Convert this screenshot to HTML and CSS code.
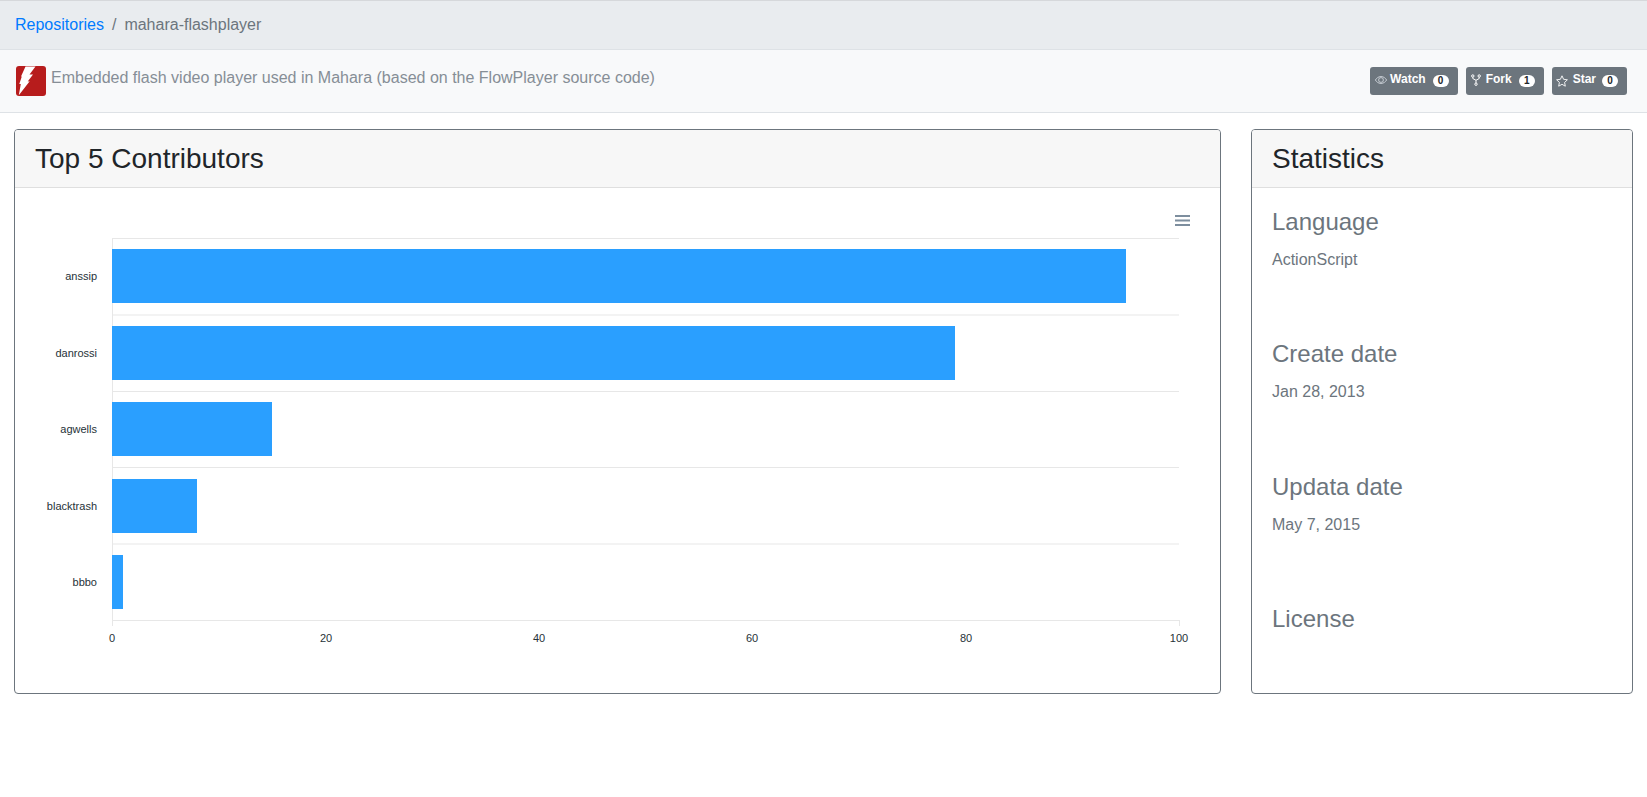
FILE: index.html
```html
<!DOCTYPE html>
<html lang="en">
<head>
<meta charset="utf-8">
<title>mahara-flashplayer</title>
<link rel="stylesheet" href="styles.css">
</head>
<body>
<nav class="crumbs"><a href="#">Repositories</a><span class="sep">/</span><span class="current">mahara-flashplayer</span></nav>
<header class="repo">
  <div class="desc">
    <svg class="logo" viewBox="0 0 30 30"><rect width="30" height="30" rx="3" fill="#b71c1c"/><path d="M9.500 .5 19.500 .5 13.500 8.500 17 8.500 11.700 15.500 13.700 15.200 2.800 29.300 4.800 18 3.300 18 5.800 10.500 5 10.500z" fill="#fff"/></svg>
    <span>Embedded flash video player used in Mahara (based on the FlowPlayer source code)</span>
  </div>
  <div class="actions">
    <a class="btn btn-watch" href="#"><svg class="ico" viewBox="0 0 12 12"><path d="M6 2.500C3.300 2.500 1.200 4.500.4 6 1.200 7.500 3.300 9.500 6 9.500S10.800 7.500 11.600 6C10.800 4.500 8.700 2.500 6 2.500z" fill="none" stroke="#ced4da" stroke-width=".9"/><circle cx="6" cy="6" r="2.400" fill="none" stroke="#ced4da" stroke-width=".9"/></svg><b>Watch</b><span class="badge">0</span></a>
    <a class="btn btn-fork" href="#"><svg class="ico" viewBox="0 0 12 12"><g fill="none" stroke="#fff" stroke-width="1"><circle cx="2.800" cy="2" r="1.200"/><circle cx="9.200" cy="2" r="1.200"/><circle cx="6" cy="10.200" r="1.200"/><path d="M2.800 3.200V4.500L6 6.300 9.200 4.500V3.200M6 6.300V9"/></g></svg><b>Fork</b><span class="badge">1</span></a>
    <a class="btn btn-star" href="#"><svg class="ico ico-star" viewBox="0 0 12 12"><path d="M6 .8l1.600 3.500 3.800.5-2.800 2.600.7 3.800L6 9.300l-3.300 1.900.7-3.800L.6 4.800l3.800-.5z" fill="none" stroke="#fff" stroke-width=".9"/></svg><b>Star</b><span class="badge">0</span></a>
  </div>
</header>
<main class="content">
  <section class="card card-chart">
    <h2 class="card-title">Top 5 Contributors</h2>
    <div class="chart">
      <svg class="chart-svg" viewBox="0 0 1205 506">
        <g class="grid">
          <path d="M97 50.500H1164M97 127H1164M97 203.500H1164M97 279.500H1164M97 356H1164M97 432.500H1164M97.500 50V438M1164.500 432V438"/>
        </g>
        <g class="bars">
          <rect x="97" y="61" width="1014" height="54"/>
          <rect x="97" y="138" width="843" height="54"/>
          <rect x="97" y="214" width="160" height="54"/>
          <rect x="97" y="291" width="85" height="54"/>
          <rect x="97" y="367" width="11" height="54"/>
        </g>
        <g class="ylabels">
          <text x="82" y="92">anssip</text>
          <text x="82" y="169">danrossi</text>
          <text x="82" y="245">agwells</text>
          <text x="82" y="322">blacktrash</text>
          <text x="82" y="398">bbbo</text>
        </g>
        <g class="xlabels">
          <text x="97" y="454">0</text>
          <text x="311" y="454">20</text>
          <text x="524" y="454">40</text>
          <text x="737" y="454">60</text>
          <text x="951" y="454">80</text>
          <text x="1164" y="454">100</text>
        </g>
        <path class="menu" d="M1160 28h15M1160 32.500h15M1160 37h15"/>
      </svg>
    </div>
  </section>
  <aside class="card card-stats">
    <h2 class="card-title">Statistics</h2>
    <div class="stats">
      <div class="stat"><h3>Language</h3><p>ActionScript</p></div>
      <div class="stat"><h3>Create date</h3><p>Jan 28, 2013</p></div>
      <div class="stat"><h3>Updata date</h3><p>May 7, 2015</p></div>
      <div class="stat"><h3>License</h3><p></p></div>
    </div>
  </aside>
</main>
</body>
</html>
```
FILE: styles.css
```css
* { box-sizing: border-box; }
html, body { margin: 0; padding: 0; }
body {
  background: #fff;
  color: #212529;
  font-family: "Liberation Sans", Arial, sans-serif;
  font-size: 16px;
  line-height: 1.5;
}
.crumbs {
  height: 50px;
  padding: 12px 15px;
  background: #e9ecef;
  border-top: 1px solid #d6d8db;
  border-bottom: 1px solid #dee2e6;
  display: flex;
}
.crumbs a { color: #007bff; text-decoration: none; }
.crumbs .sep { color: #6c757d; padding: 0 8px; }
.crumbs .current { color: #6c757d; }
.repo {
  height: 63px;
  padding: 16px 20px 0 16px;
  background: #f8f9fa;
  border-bottom: 1px solid #dee2e6;
  display: flex;
  justify-content: space-between;
  align-items: flex-start;
}
.desc { display: flex; align-items: flex-start; color: #868e96; }
.desc span { margin-top: 0; margin-left: 5px; }
.logo { width: 30px; height: 30px; flex: none; }
.actions { display: flex; gap: 8px; margin-top: 1px; }
.btn {
  height: 28px;
  padding: 0 9px 0 5px;
  background: #6c757d;
  border-radius: 3px;
  color: #fff;
  text-decoration: none;
  font-size: 12px;
  display: flex;
  align-items: flex-start;
  line-height: 24px;
}
.btn b { font-weight: 700; margin-right: 7px; }
.btn-watch b { margin-left: 3px; }
.btn-fork { padding-left: 4px; }
.btn-fork b { margin-left: 4px; }
.btn-star { padding-left: 4px; }
.btn-star b { margin-left: 5px; margin-right: 6px; }
.ico { width: 12px; height: 12px; margin-top: 7px; flex: none; }
.ico-star { margin-top: 8px; }
.badge {
  width: 16px;
  height: 12px;
  margin-top: 8px;
  border-radius: 6px;
  background: #fff;
  color: #212529;
  font-size: 10px;
  font-weight: 700;
  line-height: 12px;
  text-align: center;
}
.content {
  display: flex;
  gap: 30px;
  padding: 16px 14px 0;
}
.card {
  height: 565px;
  border: 1px solid #6c757d;
  border-radius: 4px;
  overflow: hidden;
}
.card-chart { width: 1207px; flex: none; }
.card-stats { flex: 1; }
.card-title {
  margin: 0;
  height: 58px;
  padding: 12px 20px;
  background: #f7f7f7;
  border-bottom: 1px solid #dfdfdf;
  font-size: 28px;
  font-weight: 400;
  line-height: 33.600px;
  color: #212529;
}
.chart-svg { display: block; width: 1205px; height: 506px; }
.grid path { fill: none; stroke: #e7e7e7; stroke-width: 1; }
.bars rect { fill: #2a9fff; }
.ylabels text, .xlabels text { font-family: "Liberation Sans", Arial, sans-serif; font-size: 11px; fill: #263238; }
.ylabels text { text-anchor: end; }
.xlabels text { text-anchor: middle; }
.menu { fill: none; stroke: #7d8e9e; stroke-width: 2; }
.stats { padding: 20px 20px 0; }
.stat { height: 132.400px; }
.stat h3 { margin: 0 0 11px; font-size: 24px; font-weight: 400; line-height: 28.800px; color: #6c757d; }
.stat p { margin: 0; color: #6c757d; font-size: 16px; line-height: 24px; }
```
